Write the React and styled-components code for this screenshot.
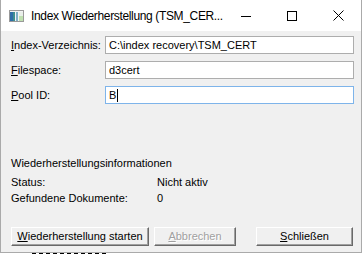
import React from "react";
import styled, { createGlobalStyle } from "styled-components";

const Global = createGlobalStyle`
  html, body { margin: 0; padding: 0; background: #ffffff; }
  #root { width: 363px; height: 254px; overflow: hidden; }
`;

const Page = styled.div`
  width: 363px;
  height: 254px;
  overflow: hidden;
  background: #ffffff;
`;

const Window = styled.div`
  width: 360px;
  height: 252px;
  border: 1px solid #aaaaaa;
  border-top: none;
  background: #f0f0f0;
  display: flex;
  flex-direction: column;
  font-family: "Liberation Sans", Arial, sans-serif;
  font-size: 11px;
  color: #000;
`;

const TitleBar = styled.div`
  height: 31px;
  background: #ffffff;
  display: flex;
  align-items: center;
  flex-shrink: 0;
`;

const AppIcon = styled.svg`
  margin-left: 8px;
  margin-right: 7px;
  flex-shrink: 0;
`;

const Title = styled.div`
  flex: 1;
  font-family: "Liberation Sans", Arial, sans-serif;
  font-size: 12px;
  letter-spacing: -0.35px;
  color: #000;
  white-space: nowrap;
`;

const CaptionButton = styled.div`
  width: 46px;
  height: 31px;
  display: flex;
  align-items: center;
  justify-content: center;
  flex-shrink: 0;
`;

const Body = styled.div`
  flex: 1;
  display: flex;
  flex-direction: column;
  padding: 5px 7px 0 10px;
`;

const Form = styled.div`
  display: grid;
  grid-template-columns: 94px 1fr;
  row-gap: 7px;
  align-items: center;
`;

const Label = styled.div`
  white-space: nowrap;
`;

const Input = styled.div`
  height: 16px;
  border: 1px solid ${(p) => (p.$focused ? "#7eb4ea" : "#adadad")};
  background: #ffffff;
  padding-left: 3px;
  display: flex;
  align-items: center;
  white-space: nowrap;
  overflow: hidden;
`;

const Caret = styled.span`
  display: inline-block;
  width: 1px;
  height: 13px;
  background: #000;
  margin-left: 1px;
`;

const InfoSection = styled.div`
  margin-top: 53px;
  display: flex;
  flex-direction: column;
`;

const InfoTitle = styled.div`
  line-height: 13px;
  margin-bottom: 6px;
`;

const InfoGrid = styled.div`
  display: grid;
  grid-template-columns: 146px 1fr;
  row-gap: 3px;
  line-height: 13px;
`;

const ButtonRow = styled.div`
  margin-top: 22px;
  display: flex;
  align-items: center;
`;

const Button = styled.div`
  box-sizing: border-box;
  width: ${(p) => p.$w}px;
  height: 19px;
  margin-left: ${(p) => p.$ml || 0}px;
  background: #f0f0f0;
  border-top: 1px solid #ffffff;
  border-left: 1px solid #ffffff;
  border-right: 1px solid #696969;
  border-bottom: 1px solid #696969;
  box-shadow: inset -1px -1px 0 #a0a0a0;
  display: flex;
  align-items: center;
  justify-content: center;
  padding-bottom: 1px;
  color: ${(p) => (p.$disabled ? "#a0a0a0" : "#000")};
  text-shadow: ${(p) => (p.$disabled ? "1px 1px 0 #ffffff" : "none")};
  white-space: nowrap;
`;

const U = styled.span`
  text-decoration: underline;
  text-underline-offset: 1px;
`;

const BehindMarks = styled.div`
  margin-left: 32px;
  width: 76px;
  height: 1px;
  background: repeating-linear-gradient(
    90deg,
    #000 0 4px,
    transparent 4px 7px
  );
`;

export default function App() {
  return (
    <Page>
      <Global />
      <Window>
        <TitleBar>
          <AppIcon width="15" height="12" viewBox="0 0 15 12">
            <rect x="0.5" y="0.5" width="14" height="11" fill="#f4f4f4" stroke="#9a9a9a" />
            <rect x="1" y="2" width="5" height="9" fill="#3f8f8f" />
            <rect x="1" y="2" width="3" height="9" fill="#2f6fa8" />
            <rect x="7" y="2" width="2" height="9" fill="#7fb0c8" />
            <rect x="10" y="2" width="4" height="9" fill="#e9efe9" />
            <rect x="10" y="6" width="4" height="5" fill="#bfe0b0" />
          </AppIcon>
          <Title>Index Wiederherstellung (TSM_CER...</Title>
          <CaptionButton>
            <svg width="10" height="10" viewBox="0 0 10 10">
              <line x1="0" y1="5.5" x2="10" y2="5.5" stroke="#000" strokeWidth="1" />
            </svg>
          </CaptionButton>
          <CaptionButton>
            <svg width="10" height="10" viewBox="0 0 10 10">
              <rect x="0.5" y="0.5" width="9" height="9" fill="none" stroke="#000" strokeWidth="1" />
            </svg>
          </CaptionButton>
          <CaptionButton>
            <svg width="11" height="11" viewBox="0 0 11 11">
              <path d="M0.5 0.5 L10.5 10.5 M10.5 0.5 L0.5 10.5" stroke="#000" strokeWidth="1" />
            </svg>
          </CaptionButton>
        </TitleBar>
        <Body>
          <Form>
            <Label><U>I</U>ndex-Verzeichnis:</Label>
            <Input>C:\index recovery\TSM_CERT</Input>
            <Label><U>F</U>ilespace:</Label>
            <Input>d3cert</Input>
            <Label><U>P</U>ool ID:</Label>
            <Input $focused>B<Caret /></Input>
          </Form>
          <InfoSection>
            <InfoTitle>Wiederherstellungsinformationen</InfoTitle>
            <InfoGrid>
              <div>Status:</div>
              <div>Nicht aktiv</div>
              <div>Gefundene Dokumente:</div>
              <div>0</div>
            </InfoGrid>
          </InfoSection>
          <ButtonRow>
            <Button $w={138}><span><U>W</U>iederherstellung starten</span></Button>
            <Button $w={82} $ml={5} $disabled><span><U>A</U>bbrechen</span></Button>
            <Button $w={97} $ml={20}><span><U>S</U>chließen</span></Button>
          </ButtonRow>
        </Body>
      </Window>
      <BehindMarks />
    </Page>
  );
}
